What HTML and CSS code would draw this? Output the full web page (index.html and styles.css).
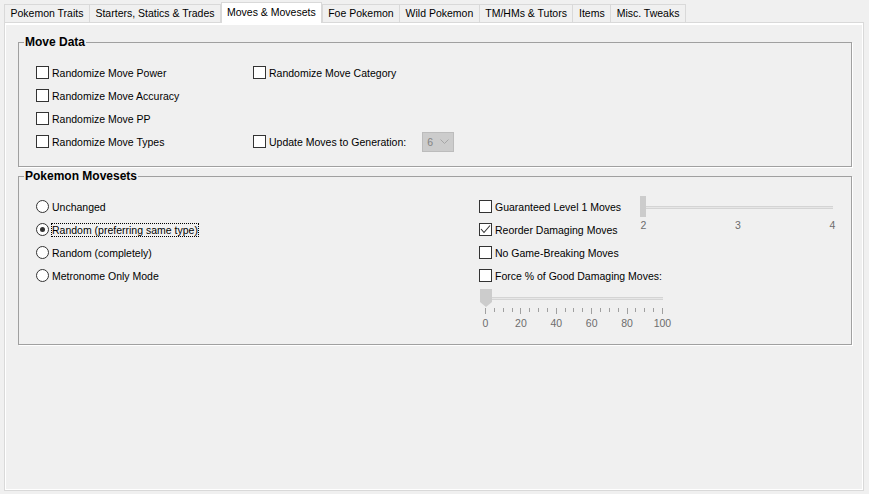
FILE: index.html
```html
<!DOCTYPE html>
<html>
<head>
<meta charset="utf-8">
<link rel="stylesheet" href="styles.css">
</head>
<body>
<div class="app">
  <div class="tabs">
    <div class="tab">Pokemon Traits</div>
    <div class="tab">Starters, Statics &amp; Trades</div>
    <div class="tab active">Moves &amp; Movesets</div>
    <div class="tab">Foe Pokemon</div>
    <div class="tab">Wild Pokemon</div>
    <div class="tab">TM/HMs &amp; Tutors</div>
    <div class="tab">Items</div>
    <div class="tab">Misc. Tweaks</div>
  </div>
  <div class="pane">
    <fieldset class="group">
      <legend>Move Data</legend>
      <div class="move-data">
        <label class="check"><span class="box"></span><span>Randomize Move Power</span></label>
        <label class="check"><span class="box"></span><span>Randomize Move Category</span></label>
        <label class="check"><span class="box"></span><span>Randomize Move Accuracy</span></label>
        <div></div>
        <label class="check"><span class="box"></span><span>Randomize Move PP</span></label>
        <div></div>
        <label class="check"><span class="box"></span><span>Randomize Move Types</span></label>
        <div class="gen-row">
          <label class="check"><span class="box"></span><span>Update Moves to Generation:</span></label>
          <div class="combo"><span>6</span><svg width="9" height="5" viewBox="0 0 9 5"><polyline points="0.5,0.5 4.5,4.5 8.5,0.5" fill="none" stroke="#a6a6a6" stroke-width="1"/></svg></div>
        </div>
      </div>
    </fieldset>

    <fieldset class="group group-movesets">
      <legend>Pokemon Movesets</legend>
      <div class="movesets">
        <div class="radios">
          <label class="radio"><span class="circle"></span><span>Unchanged</span></label>
          <label class="radio"><span class="circle on"></span><span class="focus">Random (preferring same type)</span></label>
          <label class="radio"><span class="circle"></span><span>Random (completely)</span></label>
          <label class="radio"><span class="circle"></span><span>Metronome Only Mode</span></label>
        </div>
        <div class="options">
          <label class="check"><span class="box"></span><span>Guaranteed Level 1 Moves</span></label>
          <div class="slider slider-level">
            <div class="rail"><div class="track"></div><div class="thumb-flat"></div></div>
            <div class="slider-labels"><span>2</span><span>3</span><span>4</span></div>
          </div>
          <label class="check"><span class="box"><svg width="11" height="11" viewBox="0 0 11 11"><polyline points="1,5 4,8.5 10,1.5" fill="none" stroke="#333" stroke-width="1.1"/></svg></span><span>Reorder Damaging Moves</span></label>
          <label class="check"><span class="box"></span><span>No Game-Breaking Moves</span></label>
          <label class="check"><span class="box"></span><span>Force % of Good Damaging Moves:</span></label>
          <div class="slider slider-percent">
            <div class="rail"><div class="track"></div><svg class="thumb-point" width="12" height="18" viewBox="0 0 12 18"><polygon points="0,0 12,0 12,13 6,18 0,13" fill="#cccccc"/></svg></div>
            <div class="ticks">
              <i class="major"></i><i></i><i></i><i></i><i class="major"></i><i></i><i></i><i></i><i class="major"></i><i></i><i></i><i></i><i class="major"></i><i></i><i></i><i></i><i class="major"></i><i></i><i></i><i></i><i class="major"></i>
            </div>
            <div class="slider-labels"><span>0</span><span>20</span><span>40</span><span>60</span><span>80</span><span>100</span></div>
          </div>
        </div>
      </div>
    </fieldset>
  </div>
</div>
</body>
</html>
```

FILE: styles.css
```css
* { box-sizing: border-box; }

body {
  margin: 0;
  background: #f0f0f0;
  color: #000;
  font-family: "Liberation Sans", Arial, sans-serif;
  font-size: 10.5px;
}

.app {
  padding: 2px 5px 3px 4px;
}

.tabs {
  display: flex;
  align-items: flex-end;
  height: 20px;
}

.tab {
  height: 18px;
  line-height: 17px;
  padding: 0 5.5px;
  border: 1px solid #d9d9d9;
  border-bottom: 0;
  margin-right: -1px;
  white-space: nowrap;
  background: #f0f0f0;
}

.tab.active {
  position: relative;
  z-index: 1;
  height: 21px;
  line-height: 18px;
  margin-bottom: -1px;
  margin-left: 1px;
  margin-right: 0;
  padding: 0 5px;
  background: #fff;
}

.pane {
  height: 469px;
  border: 1px solid #d9d9d9;
  box-shadow: inset 0 0 0 1px #fff, inset 0 1px 0 1px #fff;
  padding: 12px 11px 0 13px;
}

.group {
  margin: 0;
  padding: 0;
  min-width: 0;
  border: 1px solid #a0a0a0;
  box-shadow: 1px 1px 0 #fff;
}

.group legend {
  margin-left: 5px;
  padding: 0 1px;
  font-weight: bold;
  font-size: 12px;
  line-height: 14px;
}

.group-movesets {
  margin-top: 2px;
}

.move-data {
  display: grid;
  grid-template-columns: 217px auto;
  grid-auto-rows: 23px;
  padding: 12px 0 13px 17px;
}

.check, .radio {
  display: flex;
  align-items: center;
  gap: 3px;
  height: 23px;
  white-space: nowrap;
}

.box {
  width: 13px;
  height: 13px;
  border: 1px solid #333;
  background: #fff;
  display: flex;
  align-items: center;
  justify-content: center;
  flex: none;
}

.gen-row {
  display: flex;
  align-items: center;
  gap: 16px;
}

.combo {
  width: 32px;
  height: 20px;
  border: 1px solid #bcbcbc;
  background: #cccccc;
  color: #838383;
  display: flex;
  align-items: center;
  gap: 7px;
  padding-left: 4px;
}

.movesets {
  display: flex;
  padding: 12px 0 14px 17px;
}

.radios {
  width: 443px;
  display: flex;
  flex-direction: column;
}

.circle {
  width: 13px;
  height: 13px;
  border: 1px solid #333;
  border-radius: 50%;
  background: #fff;
  flex: none;
  display: flex;
  align-items: center;
  justify-content: center;
}

.circle.on::after {
  content: "";
  width: 5px;
  height: 5px;
  border-radius: 50%;
  background: #333;
}

.focus {
  outline: 1px dotted #000;
  line-height: 12px;
}

.options {
  display: grid;
  grid-template-columns: 161px 200px;
  grid-template-rows: repeat(4, 23px) auto;
}

.options .check {
  grid-column: 1;
}

.slider-level {
  grid-column: 2;
  grid-row: 1 / span 2;
  padding-top: 1px;
}

.slider .rail {
  position: relative;
}

.slider .track {
  height: 3px;
  background: #e6e6e6;
  border-top: 1px solid #d4d4d4;
  border-bottom: 1px solid #d4d4d4;
}

.slider-level .rail {
  width: 193px;
  height: 21px;
  padding-top: 10px;
}

.thumb-flat {
  position: absolute;
  left: 0;
  top: 0;
  width: 6px;
  height: 21px;
  background: #cccccc;
}

.slider-labels {
  display: flex;
  justify-content: space-between;
  color: #6d6d6d;
  line-height: 13px;
}

.slider-labels span {
  width: 1px;
  display: flex;
  justify-content: center;
  white-space: nowrap;
}

.slider-level .slider-labels {
  width: 190px;
  margin-left: 3px;
  margin-top: 2px;
}

.slider-percent {
  grid-column: 1 / span 2;
  grid-row: 5;
  margin-top: 2px;
  margin-left: 1px;
}

.slider-percent .rail {
  width: 185px;
  height: 18px;
  padding-top: 8px;
}

.slider-percent .track {
  width: 181px;
  margin-left: 2px;
}

.thumb-point {
  position: absolute;
  left: 0;
  top: 0;
}

.ticks {
  display: flex;
  justify-content: space-between;
  align-items: flex-start;
  width: 178px;
  height: 6px;
  margin: 1px 0 0 5px;
}

.ticks i {
  width: 1px;
  height: 4px;
  background: #a0a0a0;
}

.ticks i.major {
  height: 6px;
}

.slider-percent .slider-labels {
  width: 178px;
  margin: 3px 0 0 5px;
}
```
